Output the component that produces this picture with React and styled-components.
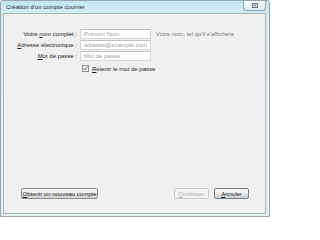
import styled, { createGlobalStyle } from "styled-components";

const Global = createGlobalStyle`
  html, body {
    margin: 0;
    padding: 0;
    background: #ffffff;
  }
  body {
    font-family: "Liberation Sans", Arial, sans-serif;
    font-size: 6px;
    color: #1e1e1e;
  }
`;

const Window = styled.div`
  width: 270px;
  height: 217px;
  box-sizing: border-box;
  border: 1px solid #98a5ac;
  border-radius: 3px 3px 0 0;
  background: linear-gradient(#c3e5f0, #d4eef5 13px, #e2edf1 40px, #e8edf0);
  display: flex;
  flex-direction: column;
  padding: 0 3px 2px 2px;
`;

const TitleBar = styled.div`
  height: 12px;
  display: flex;
  align-items: center;
  justify-content: space-between;
  padding-left: 3px;
`;

const Title = styled.span`
  color: #1b2a33;
`;

const CloseButton = styled.div`
  width: 23px;
  height: 10px;
  margin-top: -2px;
  box-sizing: border-box;
  border: 1px solid #93a6b0;
  border-top: none;
  border-radius: 0 0 3px 3px;
  background: linear-gradient(#f4fafc, #dfecf1);
  display: flex;
  align-items: center;
  justify-content: center;
`;

const Client = styled.div`
  flex: 1;
  box-sizing: border-box;
  border: 1px solid #a9b4ba;
  background: #f0f0f0;
  display: flex;
  flex-direction: column;
  padding: 15px 16px 14px 0;
`;

const Form = styled.div`
  display: grid;
  grid-template-columns: 73px 71px auto;
  column-gap: 3px;
  row-gap: 1px;
  align-items: center;
`;

const Label = styled.label`
  text-align: right;
  white-space: nowrap;
  color: #1e1e1e;
`;

const Key = styled.span`
  text-decoration: underline;
`;

const Input = styled.div`
  height: 10px;
  box-sizing: border-box;
  border: 1px solid #d3d6d9;
  border-top-color: #bcc0c4;
  background: #ffffff;
  color: #a0a0a0;
  line-height: 8px;
  padding-left: 3px;
  white-space: nowrap;
  overflow: hidden;
`;

const Hint = styled.span`
  color: #7a7a7a;
  white-space: nowrap;
  padding-left: 2px;
`;

const CheckRow = styled.div`
  grid-column: 2 / 4;
  display: flex;
  align-items: center;
  gap: 3px;
  margin-top: 3px;
  margin-left: 2px;
  white-space: nowrap;
`;

const Box = styled.span`
  width: 7px;
  height: 7px;
  box-sizing: border-box;
  border: 1px solid #8e8f8f;
  background: linear-gradient(#efefef, #ffffff);
  display: flex;
  align-items: center;
  justify-content: center;
`;

const Buttons = styled.div`
  margin-top: auto;
  display: flex;
  align-items: center;
  padding-left: 17px;
  gap: 5px;
`;

const Button = styled.div`
  height: 11px;
  box-sizing: border-box;
  border: 1px solid ${(p) => (p.$disabled ? "#cacaca" : p.$default ? "#6f7f8c" : "#8e8e8e")};
  border-radius: 2px;
  background: ${(p) =>
    p.$disabled ? "#f4f4f4" : "linear-gradient(#f3f3f3 45%, #e0e0e0 55%, #d4d4d4)"};
  color: ${(p) => (p.$disabled ? "#a6a6a6" : "#1e1e1e")};
  display: flex;
  align-items: center;
  justify-content: center;
  width: ${(p) => p.$width}px;
  white-space: nowrap;
  margin-left: ${(p) => (p.$push ? "auto" : "0")};
`;

export default function App() {
  return (
    <>
      <Global />
      <Window>
        <TitleBar>
          <Title>Création d'un compte courrier</Title>
          <CloseButton>
            <svg width="6" height="5" viewBox="0 0 6 5">
              <rect x="0.5" y="0.5" width="5" height="4" fill="none" stroke="#55646d" strokeWidth="0.8" />
              <path d="M1.5 1.2 L4.5 3.8 M4.5 1.2 L1.5 3.8" stroke="#55646d" strokeWidth="0.8" />
            </svg>
          </CloseButton>
        </TitleBar>
        <Client>
          <Form>
            <Label>
              Votre <Key>n</Key>om complet :
            </Label>
            <Input>Prénom Nom</Input>
            <Hint>Votre nom, tel qu'il s'affichera</Hint>

            <Label>
              <Key>A</Key>dresse électronique :
            </Label>
            <Input>adresse@example.com</Input>
            <span />

            <Label>
              <Key>M</Key>ot de passe :
            </Label>
            <Input>Mot de passe</Input>
            <span />

            <CheckRow>
              <Box>
                <svg width="5" height="5" viewBox="0 0 5 5">
                  <path d="M0.6 2.6 L1.9 4 L4.4 0.8" fill="none" stroke="#3d4a57" strokeWidth="0.9" />
                </svg>
              </Box>
              <span>
                <Key>R</Key>etenir le mot de passe
              </span>
            </CheckRow>
          </Form>
          <Buttons>
            <Button $width={77}>
              <span>
                <Key>O</Key>btenir un nouveau compte
              </span>
            </Button>
            <Button $width={35} $disabled $push>
              <span>
                <Key>C</Key>ontinuer
              </span>
            </Button>
            <Button $width={35} $default>
              <span>
                <Key>A</Key>nnuler
              </span>
            </Button>
          </Buttons>
        </Client>
      </Window>
    </>
  );
}
